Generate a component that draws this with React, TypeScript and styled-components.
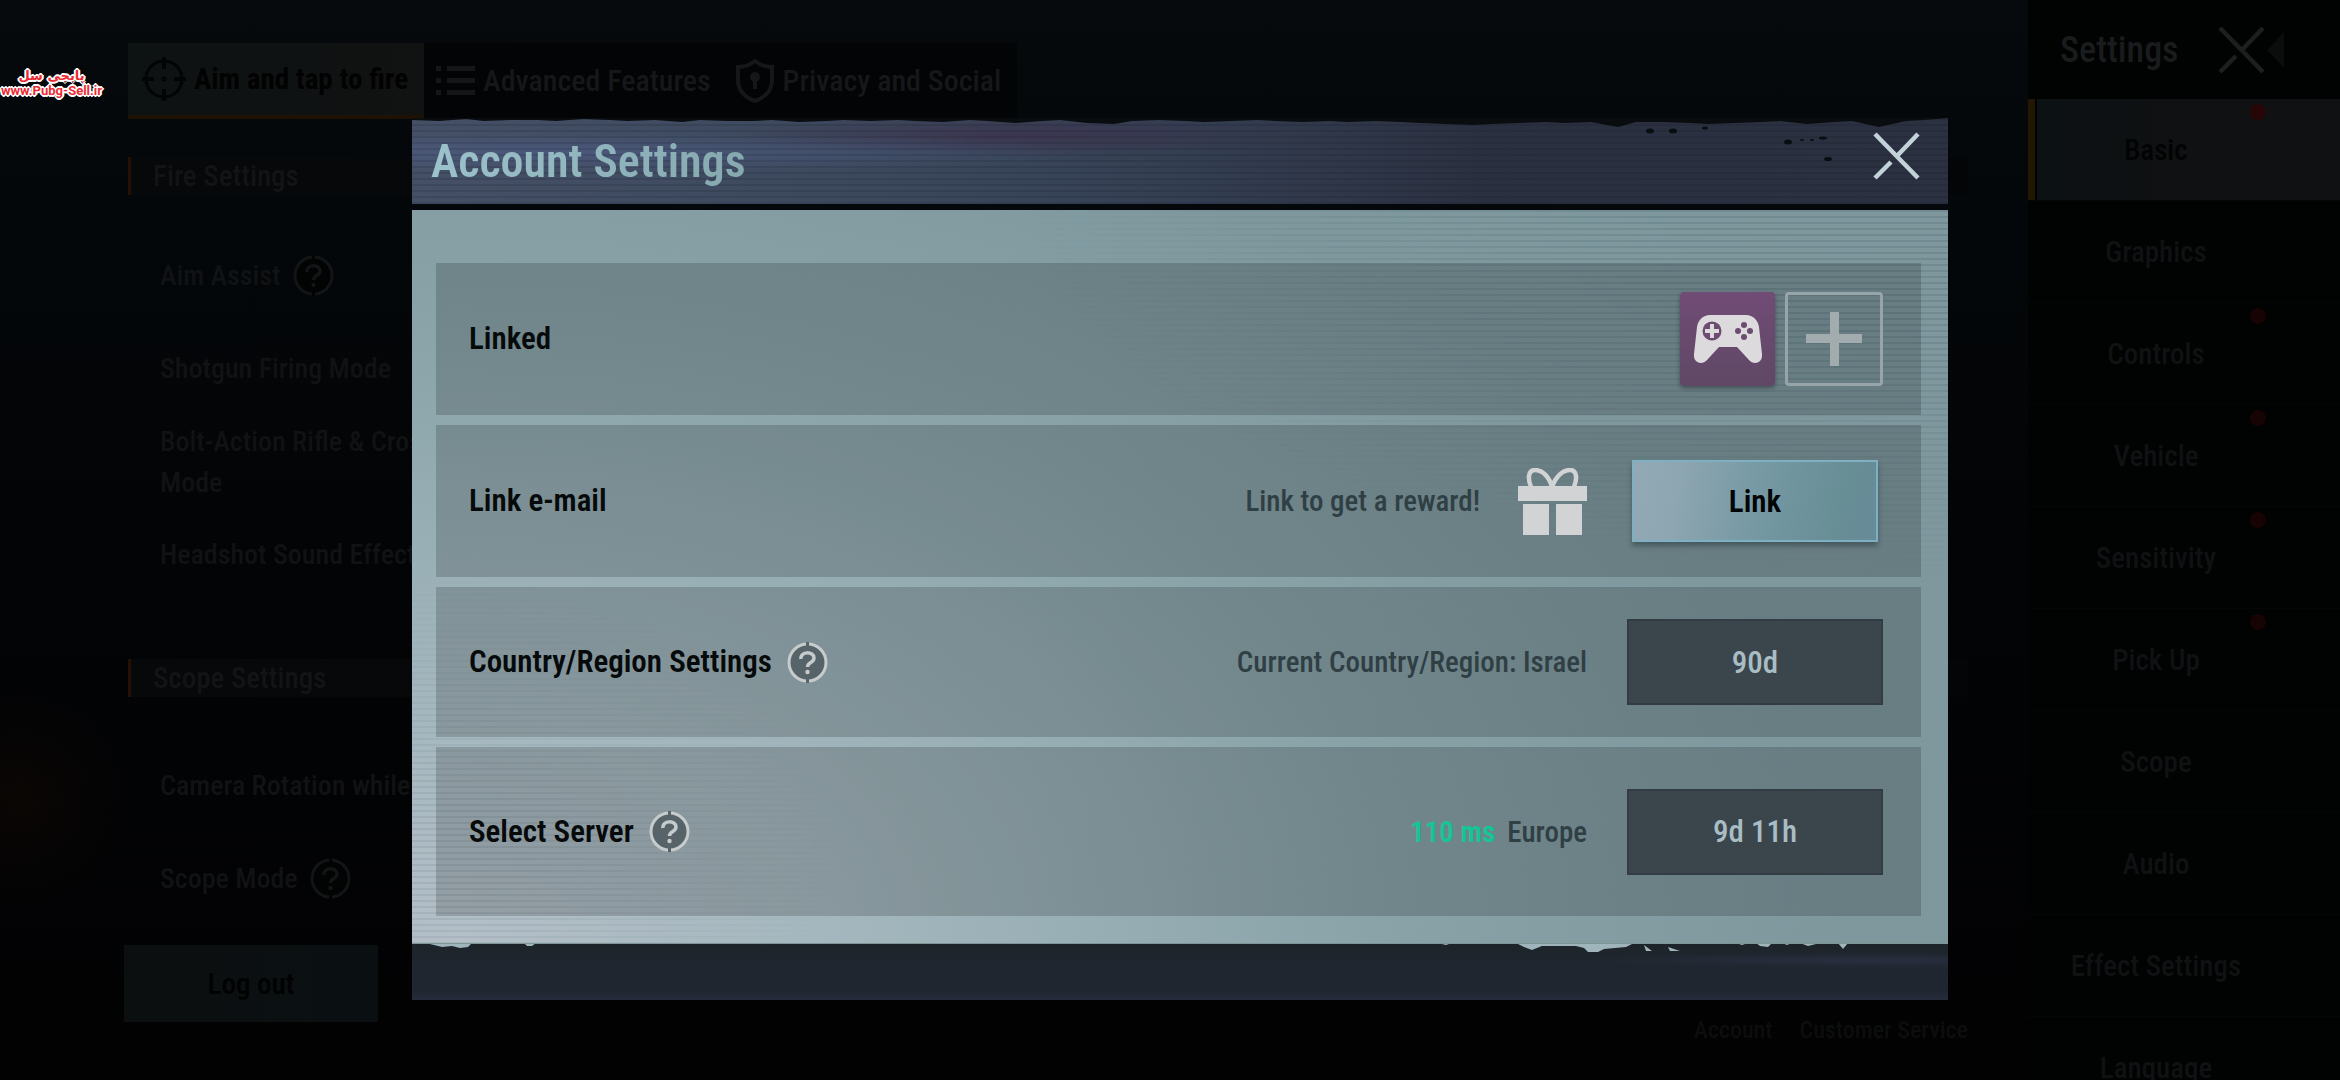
import React from "react";
import styled, { createGlobalStyle, css } from "styled-components";

const GlobalStyle = createGlobalStyle`
  *, *::before, *::after { box-sizing: border-box; }
  body {
    margin: 0;
    background: #030506;
    font-family: "Roboto Condensed", "Liberation Sans", sans-serif;
    font-weight: 500;
  }
  button, a { font: inherit; color: inherit; text-decoration: none; }
  button { border: 0; padding: 0; background: none; cursor: pointer; }
  h1, h2, h3, p, ul { margin: 0; padding: 0; font-size: inherit; font-weight: inherit; }
  ul { list-style: none; }
  svg { display: block; flex: none; }
`;

const Page = styled.div`
  position: relative;
  display: grid;
  grid-template-columns: minmax(0, 1fr) 312px;
  height: 100vh;
  overflow: hidden;
  color: #121415;
  background:
    radial-gradient(circle at 20px 800px, #0a0604 0, transparent 110px),
    linear-gradient(180deg, #060a0c 0, #04080a 12%, #030406 50%, #020203 100%);
`;

/* ---------- settings behind the dialog ---------- */

const Main = styled.main`
  display: flex;
  flex-direction: column;
  min-width: 0;
  padding: 43px 60px 0 124px;
`;

const Tabs = styled.nav`
  display: flex;
  align-self: flex-start;
  gap: 10px;
  margin-left: 4px;
  padding-right: 4px;
  background: #030405;
`;

const Tab = styled.button<{ $active?: boolean }>`
  display: flex;
  align-items: center;
  gap: 8px;
  height: 76px;
  padding: 0 12px 0 2px;
  font-size: 30px;
  line-height: 40px;
  color: #161718;
  white-space: nowrap;
  ${(p) =>
    p.$active &&
    css`
      padding: 0 16px 0 14px;
      font-weight: 700;
      font-size: 29px;
      color: #020202;
      background: linear-gradient(90deg, #0d1213, #111212);
      border-bottom: 4px solid #1d1203;
    `}
`;

const Section = styled.section<{ $gap: number }>`
  display: flex;
  flex-direction: column;
  gap: ${(p) => p.$gap}px;
  margin-left: 4px;
`;

const SectionStack = styled.div`
  display: flex;
  flex-direction: column;
  gap: 58px;
  margin: 38px 0 20px;
`;

const SectionTitle = styled.h3`
  padding-left: 22px;
  border-left: 3px solid #241103;
  font-size: 29px;
  line-height: 38px;
  background: linear-gradient(90deg, #06080a, #040506);
`;

const Option = styled.li`
  display: flex;
  align-items: center;
  gap: 12px;
  height: 93px;
  padding-left: 32px;
  font-size: 28px;
  line-height: 41px;
  color: #101214;
`;

const BottomBar = styled.div`
  display: flex;
  justify-content: space-between;
  align-items: flex-end;
  height: 98px;
`;

const LogOut = styled.button`
  align-self: flex-start;
  width: 254px;
  height: 77px;
  font-size: 29px;
  color: #010202;
  background: linear-gradient(90deg, #0c0f10, #0a1012);
`;

const FooterLinks = styled.nav`
  display: flex;
  gap: 27px;
  font-size: 24px;
  line-height: 26px;
  color: #0c0d0d;
`;

/* ---------- sidebar ---------- */

const Sidebar = styled.aside`
  display: flex;
  flex-direction: column;
  background: #010202;
`;

const SidebarHead = styled.header`
  display: flex;
  align-items: center;
  height: 99px;
  padding: 0 55px 0 32px;
  font-size: 36px;
  line-height: 44px;
  color: #191b1c;

  h2 { flex: 1; }
`;

const MenuItem = styled.li<{ $active?: boolean }>`
  position: relative;
  height: 102px;
  padding-left: 9px;
  border-bottom: 1px solid #050606;
  color: #0f1112;
  ${(p) =>
    p.$active &&
    css`
      color: #020303;
      background: linear-gradient(90deg, #211702 7px, #020202 7px, #020202 9px, #0c1113 9px, #101112 60%);
    `}

  a {
    display: flex;
    align-items: center;
    justify-content: center;
    height: 100%;
    padding-right: 65px;
    font-size: 29px;
  }
`;

const RedDot = styled.i`
  position: absolute;
  top: 5px;
  right: 74px;
  width: 16px;
  height: 16px;
  border-radius: 50%;
  background: #260607;
`;

const DimDot = styled(RedDot)`
  background: #170304;
`;

/* ---------- dialog ---------- */

const Overlay = styled.div`
  position: absolute;
  inset: 0;
  padding: 118px 392px 80px 412px;
`;

const Dialog = styled.section`
  display: flex;
  flex-direction: column;
  color: #060a0b;
`;

const DialogHead = styled.header`
  position: relative;
  display: flex;
  align-items: center;
  justify-content: space-between;
  height: 92px;
  padding: 0 28px 0 19px;
  border-bottom: 6px solid #05080b;
  background:
    repeating-linear-gradient(180deg, rgba(8, 10, 20, 0.12) 0 2px, transparent 2px 6px),
    radial-gradient(ellipse at 10% 40%, rgba(84, 100, 150, 0.45), transparent 28%),
    radial-gradient(ellipse at 39% 20%, rgba(62, 44, 74, 0.6), transparent 22%),
    linear-gradient(90deg, #455066 0, #3b485c 32%, #343f52 50%, #2b3040 70%, #2b3141 100%);

  h1 {
    font-size: 46px;
    line-height: 54px;
    font-weight: 600;
    background: linear-gradient(90deg, #9cc2cb, #86a8af);
    background-clip: text;
    color: transparent;
  }
`;

const HeadWear = styled.svg`
  position: absolute;
  left: 0;
  top: 0;
  width: 100%;
  height: 44px;
`;

const CloseButton = styled.button`
  position: relative;
  margin-bottom: 10px;
`;

const Body = styled.div`
  position: relative;
  padding: 53px 27px 27px 24px;
  background:
    linear-gradient(90deg, transparent 40%, rgba(126, 151, 158, 0.35) 100%),
    radial-gradient(ellipse 90% 120% at 3% 100%, #b4bfc8 0, #a6b8bf 24%, #98afb5 45%, #8aa4aa 68%, #7e989e 100%);

  &::before {
    content: "";
    position: absolute;
    inset: 0;
    background: repeating-linear-gradient(180deg, rgba(30, 60, 70, 0.14) 0 2px, transparent 2px 6px);
    mask-image:
      radial-gradient(ellipse 60% 50% at 100% 0, #000 30%, transparent 100%),
      radial-gradient(ellipse 26% 38% at 2% 88%, rgba(0, 0, 0, 0.6) 20%, transparent 100%);
  }
`;

const Rows = styled.div`
  position: relative;
  display: flex;
  flex-direction: column;
  gap: 10px;
`;

const Row = styled.div<{ $height?: number }>`
  display: flex;
  align-items: center;
  height: ${(p) => p.$height || 152}px;
  padding: 0 38px 0 33px;
  background: rgba(0, 0, 0, 0.17);
`;

const RowLabel = styled.h2`
  display: flex;
  align-items: center;
  gap: 15px;
  flex: 1;
  font-size: 31px;
  line-height: 40px;
  font-weight: 600;
`;

const RowNote = styled.p`
  display: flex;
  align-items: center;
  gap: 12px;
  margin-right: 40px;
  font-size: 29px;
  line-height: 40px;
  color: #2f3f44;

  svg { margin-left: 26px; }
`;

const Ping = styled.strong`
  font-weight: 600;
  color: #12c795;
`;

const LinkedAccounts = styled.div`
  display: flex;
  align-items: center;
  gap: 10px;
`;

const tile = css`
  display: grid;
  place-items: center;
  height: 94px;
  border-radius: 4px;
`;

const GameTile = styled.button`
  ${tile}
  width: 95px;
  background: linear-gradient(180deg, #714c76, #5f4865);
  box-shadow: 0 2px 4px rgba(30, 35, 45, 0.5);
`;

const AddTile = styled.button`
  ${tile}
  width: 98px;
  border: 3px solid #98a5a8;
`;

const ActionSlot = styled.div`
  display: flex;
  justify-content: center;
  width: 256px;
`;

const LinkButton = styled.button`
  width: 246px;
  height: 82px;
  border: 2px solid #7fb0c2;
  font-size: 31px;
  font-weight: 600;
  color: #020506;
  background: linear-gradient(100deg, #93aab6 0, #8ea6b1 18%, #7699a4 50%, #678d95 85%, #688b98 100%);
  box-shadow: 0 4px 5px rgba(30, 45, 50, 0.45);
`;

const TimerButton = styled.button`
  width: 256px;
  height: 86px;
  border: 2px solid #323c42;
  font-size: 31px;
  color: #a9bdc5;
  background: #3b464c;
`;

const DialogFoot = styled.footer`
  position: relative;
  height: 57px;
  background:
    radial-gradient(ellipse at 95% 30%, rgba(46, 50, 72, 0.7), transparent 14%),
    linear-gradient(180deg, #1d2429, #20262f 40%, #20262f 80%, #252b3a);
`;

const FootWear = styled.svg`
  position: absolute;
  left: 0;
  top: 0;
  width: 100%;
  height: 12px;
`;

const Watermark = styled.a`
  position: absolute;
  left: 1px;
  top: 68px;
  display: flex;
  flex-direction: column;
  align-items: center;
  font-family: Roboto, "Liberation Sans", sans-serif;
  font-size: 13px;
  line-height: 15px;
  font-weight: 700;
  color: #ee2b35;
  text-shadow: 1px 1px #fff, -1px 1px #fff, 1px -1px #fff, -1px -1px #fff, 0 2px #fff, 0 -2px #fff, 2px 0 #fff, -2px 0 #fff;

  span { font-family: "DejaVu Sans", sans-serif; }
`;

/* ---------- drawings ---------- */

const Crosshair = () => (
  <svg width="44" height="44" viewBox="0 0 44 44" fill="none" stroke="#030404" strokeWidth="3">
    <circle cx="22" cy="22" r="18" />
    <path d="M22 0v12M22 32v12M0 22h12M32 22h12" strokeWidth="4" />
    <circle cx="22" cy="22" r="1" />
  </svg>
);

const ListIcon = () => (
  <svg width="39" height="30" viewBox="0 0 39 30" fill="#151617">
    <path d="M0 0h5v5H0zM11 0h28v5H11zM0 12h5v5H0zM11 12h28v5H11zM0 24h5v5H0zM11 24h28v5H11z" />
  </svg>
);

const Shield = () => (
  <svg width="40" height="44" viewBox="0 0 40 44">
    <path d="M20 2c5 4 11 6 17 6v13c0 10-6 17-17 21C9 38 3 31 3 21V8c6 0 12-2 17-6z" fill="none" stroke="#161718" strokeWidth="4" />
    <circle cx="20" cy="18" r="5" fill="#161718" />
    <path d="M18 18h4v12h-4z" fill="#161718" />
  </svg>
);

const HelpIcon = ({ dim }: { dim?: boolean }) => {
  const line = dim ? "#131416" : "#c6cbcc";
  const fill = dim ? "#020303" : "#56646a";
  return (
    <svg width="41" height="41" viewBox="0 0 41 41" fill="none">
      <circle cx="20.5" cy="20.5" r="18.5" fill={fill} stroke={line} strokeWidth="3" />
      <path d="M20.5 0v5M20.5 36v5" stroke={fill} strokeWidth="3" />
      <path d="M14 17c-1-8 13-8 13-1 0 5-6.500 4-6.500 9" stroke={line} strokeWidth="3.5" />
      <circle cx="20.5" cy="30" r="2.2" fill={line} />
    </svg>
  );
};

const CrossIcon = ({ color }: { color: string }) => (
  <svg width="47" height="48" viewBox="0 0 47 48" stroke={color} strokeWidth="4.5">
    <path d="M2 2l43 44M45 2L23 25M18 30L2 46" />
  </svg>
);

const Gamepad = () => (
  <svg width="70" height="48" viewBox="0 0 70 48">
    <path d="M17 0h36c7 0 12 5 13 12l3 27c1 10-9 11-13 6L44 32H26L14 45c-4 5-14 4-13-6l3-27C5 5 10 0 17 0z" fill="#dcdadc" />
    <circle cx="19" cy="16" r="9.5" fill="#6c4c71" />
    <path d="M19 9v14M12 16h14" stroke="#dcdadc" strokeWidth="4" />
    <g fill="#6c4c71">
      <circle cx="51" cy="10" r="3" />
      <circle cx="51" cy="22" r="3" />
      <circle cx="45" cy="16" r="3" />
      <circle cx="57" cy="16" r="3" />
    </g>
  </svg>
);

const PlusIcon = () => (
  <svg width="56" height="54" viewBox="0 0 56 54" fill="#a2acaf">
    <path d="M24 0h9v22h23v9H33v23h-9V31H0v-9h24z" />
  </svg>
);

const GiftIcon = () => (
  <svg width="69" height="67" viewBox="0 0 69 67">
    <path
      d="M34 19C31 8 24 2 17 2c-6 0-8 7-4 17M34 19C38 8 45 2 52 2c6 0 8 7 4 17"
      fill="none"
      stroke="#d2d3d4"
      strokeWidth="4.5"
    />
    <path d="M0 18h69v15H0zM5 36h26v31H5zM38 36h26v31H38z" fill="#d2d3d4" />
  </svg>
);

/* Worn paint along the top edge of the title bar: one depth for each 24 units of width. */
const wearDepths = [
  2, 3, 1, 3, 2, 2, 3, 1, 2, 3, 2, 4, 2, 3, 3, 2, 4, 3, 2, 3, 2, 3, 4, 2, 3, 5, 3, 2, 5, 6, 3, 2,
  3, 4, 3, 2, 3, 4, 3, 4, 3, 4, 5, 6, 7, 6, 5, 4, 5, 4, 9, 4, 4, 5, 6, 5, 4, 3, 6, 4, 3, 9, 3, 2,
];
const wearPath =
  "M0 0H1536" +
  wearDepths
    .map((d, i) => `L${i * 24 + (i % 3) * 3} ${d}`)
    .reverse()
    .join("") +
  "Z";

/* ---------- data ---------- */

const menu = [
  { name: "Basic", dot: true },
  { name: "Graphics", dot: false },
  { name: "Controls", dot: true },
  { name: "Vehicle", dot: true },
  { name: "Sensitivity", dot: true },
  { name: "Pick Up", dot: true },
  { name: "Scope", dot: false },
  { name: "Audio", dot: false },
  { name: "Effect Settings", dot: false },
  { name: "Language", dot: false },
];

export default function App() {
  return (
    <>
      <GlobalStyle />
      <Page>
        <Main>
          <Tabs>
            <Tab $active>
              <Crosshair />
              Aim and tap to fire
            </Tab>
            <Tab>
              <ListIcon />
              Advanced Features
            </Tab>
            <Tab>
              <Shield />
              Privacy and Social
            </Tab>
          </Tabs>
          <SectionStack>
            <Section $gap={34}>
              <SectionTitle>Fire Settings</SectionTitle>
              <ul>
                <Option>
                  Aim Assist <HelpIcon dim />
                </Option>
                <Option>Shotgun Firing Mode</Option>
                <Option>
                  Bolt-Action Rifle &amp; Crossbow
                  <br />
                  Mode
                </Option>
                <Option>Headshot Sound Effect</Option>
              </ul>
            </Section>
            <Section $gap={42}>
              <SectionTitle>Scope Settings</SectionTitle>
              <ul>
                <Option>Camera Rotation while</Option>
                <Option>
                  Scope Mode <HelpIcon dim />
                </Option>
              </ul>
            </Section>
          </SectionStack>
          <BottomBar>
            <LogOut>Log out</LogOut>
            <FooterLinks>
              <a href="#account">Account</a>
              <a href="#service">Customer Service</a>
            </FooterLinks>
          </BottomBar>
        </Main>

        <Sidebar>
          <SidebarHead>
            <h2>Settings</h2>
            <button aria-label="Close settings">
              <CrossIcon color="#1c1f20" />
            </button>
            <svg width="20" height="36" viewBox="0 0 20 36">
              <path d="M19 0v36L2 18z" fill="#0b0c0c" />
            </svg>
          </SidebarHead>
          <ul>
            {menu.map((item, i) => (
              <MenuItem key={item.name} $active={i === 0}>
                <a href={"#" + item.name}>{item.name}</a>
                {item.dot && (i === 0 ? <RedDot /> : <DimDot />)}
              </MenuItem>
            ))}
          </ul>
        </Sidebar>

        <Overlay>
          <Dialog role="dialog" aria-labelledby="dialog-title">
            <DialogHead>
              <HeadWear viewBox="0 0 1536 44" preserveAspectRatio="none" fill="#0a0d10">
                <path d={wearPath} />
                <ellipse cx="1238" cy="13" rx="4" ry="2.5" />
                <ellipse cx="1261" cy="13" rx="4" ry="2.5" />
                <ellipse cx="1293" cy="10" rx="3" ry="1.5" />
                <ellipse cx="1376" cy="24" rx="4" ry="2.5" />
                <ellipse cx="1411" cy="20" rx="4" ry="1.5" />
                <ellipse cx="1400" cy="22" rx="2" ry="1" />
                <ellipse cx="1390" cy="22" rx="2" ry="1" />
                <ellipse cx="1416" cy="41" rx="4" ry="2" />
              </HeadWear>
              <h1 id="dialog-title">Account Settings</h1>
              <CloseButton aria-label="Close">
                <CrossIcon color="#c3d2d8" />
              </CloseButton>
            </DialogHead>

            <Body>
              <Rows>
                <Row>
                  <RowLabel>Linked</RowLabel>
                  <LinkedAccounts>
                    <GameTile aria-label="Google Play Games">
                      <Gamepad />
                    </GameTile>
                    <AddTile aria-label="Add account">
                      <PlusIcon />
                    </AddTile>
                  </LinkedAccounts>
                </Row>
                <Row>
                  <RowLabel>Link e-mail</RowLabel>
                  <RowNote>
                    Link to get a reward!
                    <GiftIcon />
                  </RowNote>
                  <ActionSlot>
                    <LinkButton>Link</LinkButton>
                  </ActionSlot>
                </Row>
                <Row $height={150}>
                  <RowLabel>
                    Country/Region Settings <HelpIcon />
                  </RowLabel>
                  <RowNote>Current Country/Region: Israel</RowNote>
                  <TimerButton>90d</TimerButton>
                </Row>
                <Row $height={169}>
                  <RowLabel>
                    Select Server <HelpIcon />
                  </RowLabel>
                  <RowNote>
                    <Ping>110 ms</Ping> Europe
                  </RowNote>
                  <TimerButton>9d 11h</TimerButton>
                </Row>
              </Rows>
            </Body>

            <DialogFoot>
              <FootWear viewBox="0 0 1536 12" preserveAspectRatio="none" fill="#9fb4bb">
                <path d="M14 0H60L56 4L48 5L40 3L30 4L22 2ZM112 0H124L120 3L115 3ZM1026 0H1040L1034 2ZM1104 0H1222L1214 4L1192 6L1186 9L1176 9L1172 5L1164 3L1130 3L1120 7L1112 4ZM1324 0H1336L1330 2ZM1344 0H1360L1356 4L1348 3ZM1370 0H1380L1375 2ZM1388 0H1408L1396 3ZM1426 0H1436L1431 6Z" />
                <path d="M1232 2L1240 8H1234ZM1256 4L1268 8H1258Z" />
                <path d="M0 0h1536v1H0z" fill="#7f9494" />
              </FootWear>
            </DialogFoot>
          </Dialog>
        </Overlay>

        <Watermark href="#watermark">
          <span>پابجی سل</span>
          www.Pubg-Sell.ir
        </Watermark>
      </Page>
    </>
  );
}
